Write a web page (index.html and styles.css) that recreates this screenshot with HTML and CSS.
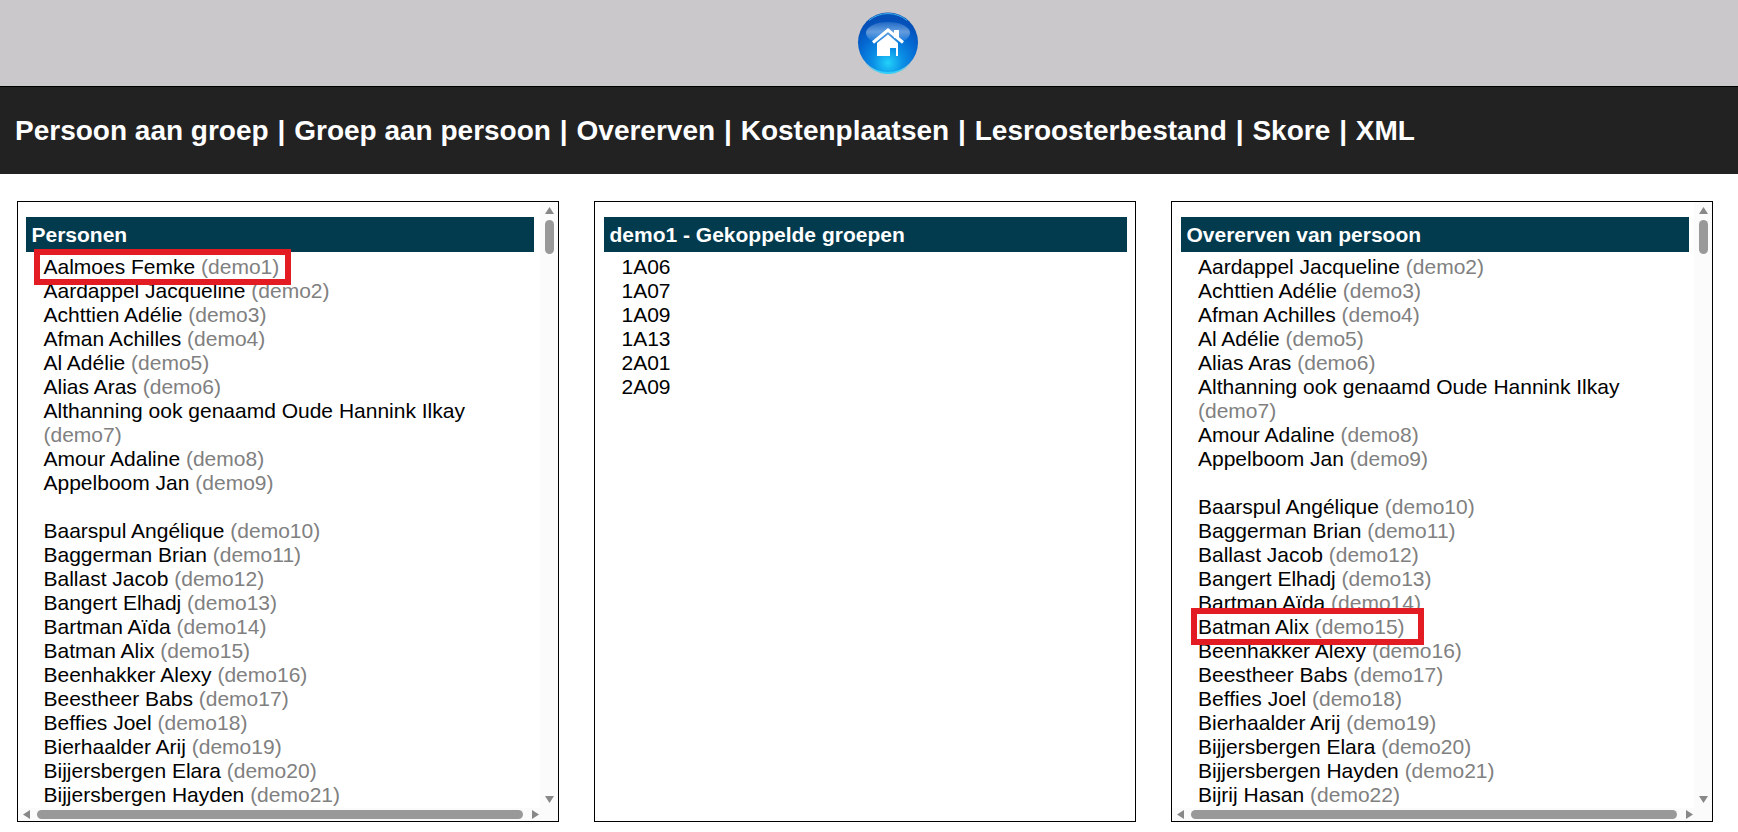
FILE: index.html
```html
<!DOCTYPE html>
<html lang="nl">
<head>
<meta charset="utf-8">
<title>Koppelingen</title>
<link rel="stylesheet" href="styles.css">
</head>
<body>
<header class="topbar">
  <svg class="home" width="62" height="62" viewBox="0 0 62 62" aria-label="Home">
    <defs>
      <radialGradient id="ball" cx="50%" cy="84%" r="72%">
        <stop offset="0" stop-color="#22d0fa"/>
        <stop offset="0.35" stop-color="#0a8fe6"/>
        <stop offset="0.7" stop-color="#0568d2"/>
        <stop offset="1" stop-color="#0450b8"/>
      </radialGradient>
      <linearGradient id="gloss" x1="0" y1="0" x2="0" y2="1">
        <stop offset="0" stop-color="#ffffff" stop-opacity="0.12"/>
        <stop offset="0.45" stop-color="#ffffff" stop-opacity="0.38"/>
        <stop offset="1" stop-color="#ffffff" stop-opacity="0"/>
      </linearGradient>
      <linearGradient id="rim" x1="0" y1="0" x2="0" y2="1">
        <stop offset="0" stop-color="#1fc8f8" stop-opacity="0"/>
        <stop offset="1" stop-color="#25d0fa"/>
      </linearGradient>
    </defs>
    <circle cx="31" cy="30.5" r="30" fill="url(#ball)"/>
    <path d="M12 8.500A29.500 29.500 0 0 1 50 8.500" fill="none" stroke="#4fc8f5" stroke-opacity="0.8"/>
    <path d="M7 50A30 30 0 0 0 55 50 34 34 0 0 1 7 50Z" fill="url(#rim)"/>
    <ellipse cx="31" cy="21" rx="22" ry="11" fill="url(#gloss)"/>
    <path d="M37 18h5v8h-5z" fill="#fff"/>
    <path d="M16 30.500 31 18 46 30.500" fill="none" stroke="#fff" stroke-width="3"/>
    <path d="M20 31 31 22.500 41 31V44H39V36H33V44H20z" fill="#fff"/>
  </svg>
</header>
<nav class="menu">Persoon aan groep <span class="sep">|</span> Groep aan persoon <span class="sep">|</span> Overerven <span class="sep">|</span> Kostenplaatsen <span class="sep">|</span> Lesroosterbestand <span class="sep">|</span> Skore <span class="sep">|</span> XML</nav>
<main class="panels">
  <section class="panel">
    <div class="content">
      <h2 class="title">Personen</h2>
      <ul class="list">
        <li>Aalmoes Femke <span class="code">(demo1)</span></li>
        <li>Aardappel Jacqueline <span class="code">(demo2)</span></li>
        <li>Achttien Adélie <span class="code">(demo3)</span></li>
        <li>Afman Achilles <span class="code">(demo4)</span></li>
        <li>Al Adélie <span class="code">(demo5)</span></li>
        <li>Alias Aras <span class="code">(demo6)</span></li>
        <li>Althanning ook genaamd Oude Hannink Ilkay <span class="code">(demo7)</span></li>
        <li>Amour Adaline <span class="code">(demo8)</span></li>
        <li>Appelboom Jan <span class="code">(demo9)</span></li>
        <li class="spacer">&nbsp;</li>
        <li>Baarspul Angélique <span class="code">(demo10)</span></li>
        <li>Baggerman Brian <span class="code">(demo11)</span></li>
        <li>Ballast Jacob <span class="code">(demo12)</span></li>
        <li>Bangert Elhadj <span class="code">(demo13)</span></li>
        <li>Bartman Aïda <span class="code">(demo14)</span></li>
        <li>Batman Alix <span class="code">(demo15)</span></li>
        <li>Beenhakker Alexy <span class="code">(demo16)</span></li>
        <li>Beestheer Babs <span class="code">(demo17)</span></li>
        <li>Beffies Joel <span class="code">(demo18)</span></li>
        <li>Bierhaalder Arij <span class="code">(demo19)</span></li>
        <li>Bijjersbergen Elara <span class="code">(demo20)</span></li>
        <li>Bijjersbergen Hayden <span class="code">(demo21)</span></li>
      </ul>
    </div>
    <div class="vbar">
      <svg class="arrow" width="9" height="7" viewBox="0 0 9 7"><path d="M4.500 0 9 7H0z"/></svg>
      <div class="vthumb"></div>
      <svg class="arrow arrow-end" width="9" height="7" viewBox="0 0 9 7"><path d="M0 0h9L4.500 7z"/></svg>
    </div>
    <div class="hbar">
      <svg class="arrow" width="7" height="9" viewBox="0 0 7 9"><path d="M7 0v9L0 4.500z"/></svg>
      <div class="hthumb"></div>
      <svg class="arrow" width="7" height="9" viewBox="0 0 7 9"><path d="M0 0l7 4.500L0 9z"/></svg>
    </div>
    <div class="mark mark-left"></div>
  </section>

  <section class="panel panel-plain">
    <div class="content">
      <h2 class="title">demo1 - Gekoppelde groepen</h2>
      <ul class="list">
        <li>1A06</li>
        <li>1A07</li>
        <li>1A09</li>
        <li>1A13</li>
        <li>2A01</li>
        <li>2A09</li>
      </ul>
    </div>
  </section>

  <section class="panel panel-right">
    <div class="content">
      <h2 class="title">Overerven van persoon</h2>
      <ul class="list">
        <li>Aardappel Jacqueline <span class="code">(demo2)</span></li>
        <li>Achttien Adélie <span class="code">(demo3)</span></li>
        <li>Afman Achilles <span class="code">(demo4)</span></li>
        <li>Al Adélie <span class="code">(demo5)</span></li>
        <li>Alias Aras <span class="code">(demo6)</span></li>
        <li>Althanning ook genaamd Oude Hannink Ilkay <span class="code">(demo7)</span></li>
        <li>Amour Adaline <span class="code">(demo8)</span></li>
        <li>Appelboom Jan <span class="code">(demo9)</span></li>
        <li class="spacer">&nbsp;</li>
        <li>Baarspul Angélique <span class="code">(demo10)</span></li>
        <li>Baggerman Brian <span class="code">(demo11)</span></li>
        <li>Ballast Jacob <span class="code">(demo12)</span></li>
        <li>Bangert Elhadj <span class="code">(demo13)</span></li>
        <li>Bartman Aïda <span class="code">(demo14)</span></li>
        <li>Batman Alix <span class="code">(demo15)</span></li>
        <li>Beenhakker Alexy <span class="code">(demo16)</span></li>
        <li>Beestheer Babs <span class="code">(demo17)</span></li>
        <li>Beffies Joel <span class="code">(demo18)</span></li>
        <li>Bierhaalder Arij <span class="code">(demo19)</span></li>
        <li>Bijjersbergen Elara <span class="code">(demo20)</span></li>
        <li>Bijjersbergen Hayden <span class="code">(demo21)</span></li>
        <li>Bijrij Hasan <span class="code">(demo22)</span></li>
      </ul>
    </div>
    <div class="vbar">
      <svg class="arrow" width="9" height="7" viewBox="0 0 9 7"><path d="M4.500 0 9 7H0z"/></svg>
      <div class="vthumb"></div>
      <svg class="arrow arrow-end" width="9" height="7" viewBox="0 0 9 7"><path d="M0 0h9L4.500 7z"/></svg>
    </div>
    <div class="hbar">
      <svg class="arrow" width="7" height="9" viewBox="0 0 7 9"><path d="M7 0v9L0 4.500z"/></svg>
      <div class="hthumb"></div>
      <svg class="arrow" width="7" height="9" viewBox="0 0 7 9"><path d="M0 0l7 4.500L0 9z"/></svg>
    </div>
    <div class="mark mark-right"></div>
  </section>
</main>
</body>
</html>
```
FILE: styles.css
```css
* {
  box-sizing: border-box;
}

html,
body {
  margin: 0;
  padding: 0;
  height: 100%;
  overflow: hidden;
  background: #fff;
  font-family: "Liberation Sans", Arial, sans-serif;
}

body {
  display: flex;
  flex-direction: column;
}

.topbar {
  height: 86px;
  flex: none;
  background: #cac8ca;
  display: flex;
  justify-content: center;
  align-items: flex-start;
  padding: 12px 0 0 38px;
}

.home {
  display: block;
}

.menu {
  height: 88px;
  flex: none;
  background: #222;
  border-top: 1px solid #000;
  color: #fff;
  font-size: 28px;
  font-weight: bold;
  line-height: 87px;
  padding-left: 15px;
  white-space: nowrap;
}

.sep {
  margin: 0 1.1px;
}

.panels {
  flex: 1;
  min-height: 0;
  display: flex;
  gap: 35px;
  padding: 27px 25px 10px 17px;
}

.panel {
  position: relative;
  flex: 1;
  min-width: 0;
  border: 1px solid #000;
  background: #fff;
  display: grid;
  grid-template-columns: minmax(0, 1fr) 18px;
  grid-template-rows: minmax(0, 1fr) 13px;
}

.panel-plain {
  grid-template-columns: minmax(0, 1fr);
  grid-template-rows: minmax(0, 1fr);
}

.content {
  overflow: hidden;
  padding: 15px 6px 0 8px;
}

.panel-plain .content {
  padding: 15px 8px 0 9px;
}

.panel-right .content {
  padding: 15px 5px 0 9px;
}

.title {
  margin: 0;
  height: 35px;
  background: #023a4e;
  color: #fff;
  font-size: 21px;
  font-weight: bold;
  line-height: 36px;
  padding-left: 5.5px;
}

.list {
  list-style: none;
  margin: 0;
  padding: 3px 0 0 17.5px;
  color: #000;
  font-size: 21px;
  line-height: 24px;
}

.panel-right .list {
  padding-left: 17px;
}

.code {
  color: #808080;
}

.vbar {
  background: #fbfbfb;
  display: flex;
  flex-direction: column;
  align-items: flex-start;
  padding: 5px 0 5px 5px;
}

.vthumb {
  width: 9px;
  height: 34px;
  margin-top: 6px;
  border-radius: 5px;
  background: #999;
}

.hbar {
  grid-column: 1 / -1;
  background: #fbfbfb;
  display: flex;
  align-items: center;
  padding: 0 19px 0 5px;
}

.hthumb {
  flex: 1;
  height: 9px;
  margin: 0 9px 0 7px;
  border-radius: 5px;
  background: #999;
}

.arrow {
  display: block;
  flex: none;
  fill: #888;
}

.arrow-end {
  margin-top: auto;
}

.mark {
  position: absolute;
  border: 6px solid #e31b23;
}

.mark-left {
  left: 16px;
  top: 47px;
  width: 257px;
  height: 36px;
}

.mark-right {
  left: 19px;
  top: 406px;
  width: 233px;
  height: 37px;
}
```
